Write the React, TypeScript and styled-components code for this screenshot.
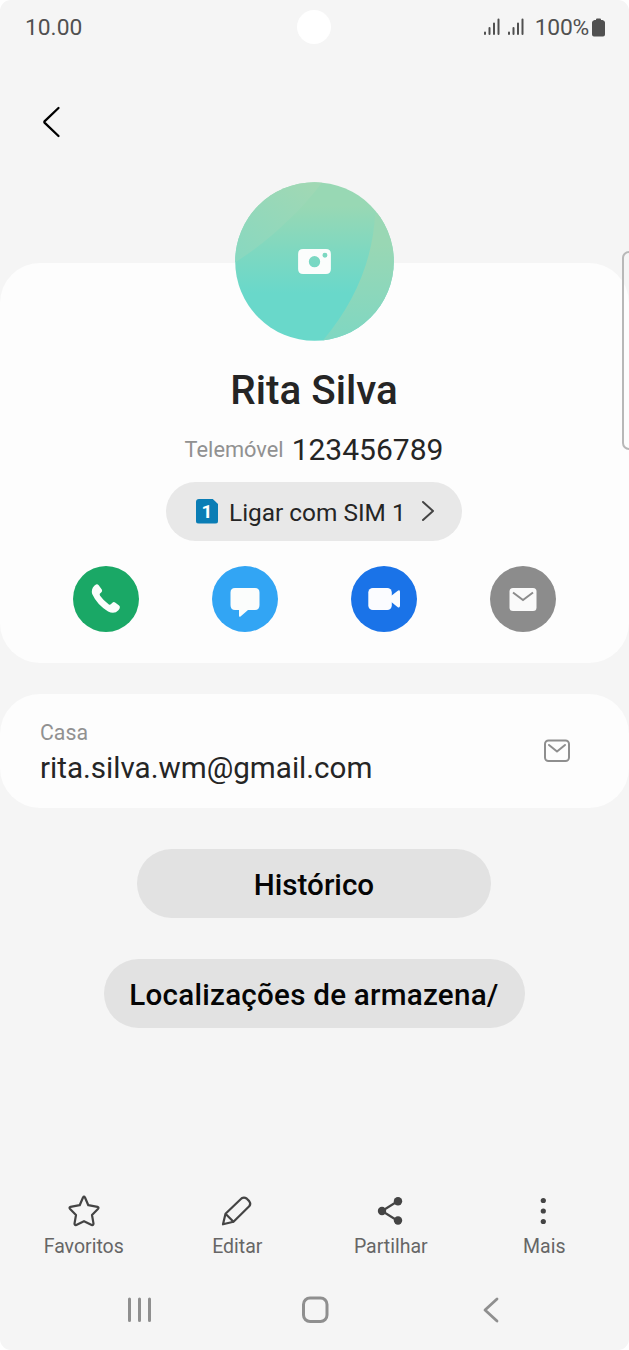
import React from 'react';
import styled, { createGlobalStyle } from 'styled-components';

const GlobalStyle = createGlobalStyle`
  * { box-sizing: border-box; }
  body { margin: 0; background: #fff; font-family: Roboto, "Liberation Sans", sans-serif; }
  button { border: 0; padding: 0; margin: 0; background: none; font: inherit; color: inherit; display: flex; }
  svg { display: block; flex: none; }
`;

const Screen = styled.main`
  position: relative;
  display: flex;
  flex-direction: column;
  width: 629px;
  height: 1350px;
  background: #f5f5f5;
  border-radius: 11px;
  overflow: hidden;
`;

const StatusBar = styled.header`
  display: grid;
  grid-template-columns: 1fr 34px 1fr;
  align-items: center;
  height: 54px;
  padding: 0 24px 0 25px;
  color: #505050;
  font-size: 22.8px;
  line-height: 28px;
`;

const Clock = styled.span`
  padding-top: 1px;
`;

const PunchHole = styled.div`
  width: 34px;
  height: 34px;
  margin-left: -1px;
  border-radius: 50%;
  background: #fff;
`;

const StatusIcons = styled.div`
  display: flex;
  justify-content: flex-end;
  align-items: center;
`;

const Percent = styled.span`
  margin: 0 3px 0 4px;
  padding-top: 1px;
  letter-spacing: -0.2px;
`;

const TopBar = styled.nav`
  display: flex;
  align-items: center;
  height: 137px;
  padding: 0 0 2px 40px;
`;

const Card = styled.section`
  background: #fdfdfd;
`;

const ProfileCard = styled(Card)`
  display: flex;
  flex-direction: column;
  align-items: center;
  height: 400px;
  margin-top: 71.5px;
  padding-right: 1px;
  border-radius: 40px;
`;

const Avatar = styled.button`
  flex: none;
  width: 159px;
  height: 159px;
  margin-top: -81px;
`;

const Name = styled.h1`
  margin: 26px 0 0;
  font-size: 40.4px;
  line-height: 48px;
  font-weight: 500;
  color: #252525;
`;

const PhoneLine = styled.div`
  display: flex;
  align-items: center;
  gap: 8px;
  height: 36px;
  margin-top: 17px;
`;

const Caption = styled.span`
  font-size: 21.8px;
  line-height: 28px;
  color: #919191;
`;

const EmailCaption = styled(Caption)`
  font-size: 21.3px;
`;

const PhoneNumber = styled.span`
  font-size: 30px;
  line-height: 36px;
  color: #252525;
`;

const SimButton = styled.button`
  align-items: center;
  width: 296px;
  height: 59px;
  margin-top: 14px;
  padding: 0 27px 0 30px;
  border-radius: 30px;
  background: #e8e8e8;
  color: #252525;
  font-size: 24.4px;
`;

const SimBadge = styled.span`
  width: 22px;
  height: 25px;
  margin-right: 11px;
  border-radius: 3px;
  background: #0a7db5;
  clip-path: polygon(0 0, 74% 0, 100% 22%, 100% 100%, 0 100%);
  color: #fff;
  font-size: 19px;
  font-weight: 700;
  line-height: 26px;
  text-align: center;
`;

const SimLabel = styled.span`
  flex: 1;
  padding-top: 2px;
  text-align: left;
  white-space: nowrap;
`;

const Actions = styled.div`
  display: flex;
  justify-content: space-between;
  width: 483px;
  margin-top: 25px;
`;

const ActionButton = styled.button<{ $color: string }>`
  align-items: center;
  justify-content: center;
  width: 66px;
  height: 66px;
  border-radius: 50%;
  background: ${({ $color }) => $color};
`;

const EmailCard = styled(Card)`
  display: flex;
  align-items: center;
  justify-content: space-between;
  height: 114px;
  margin-top: 31.5px;
  padding: 2px 58px 0 40px;
  border-radius: 40px;
`;

const EmailText = styled.div`
  display: flex;
  flex-direction: column;
  gap: 3px;
`;

const Email = styled.span`
  font-size: 29.6px;
  line-height: 36px;
  color: #252525;
`;

const EmailAction = styled.button`
  padding-bottom: 3px;
`;

const PillList = styled.div`
  display: flex;
  flex-direction: column;
  align-items: center;
  gap: 41px;
  margin-top: 41px;
  padding-right: 1px;
`;

const Pill = styled.button<{ $width: number; $tracking?: number }>`
  align-items: center;
  justify-content: center;
  width: ${({ $width }) => $width}px;
  height: 69px;
  padding-top: 2px;
  border-radius: 35px;
  background: #e2e2e2;
  color: #050505;
  font-size: 29.6px;
  font-weight: 500;
  letter-spacing: ${({ $tracking = 0 }) => $tracking}px;
  white-space: nowrap;
`;

const Toolbar = styled.div`
  display: grid;
  grid-template-columns: repeat(4, 1fr);
  padding: 0 8px 0 7px;
  margin-top: auto;
`;

const Tool = styled.button`
  flex-direction: column;
  align-items: center;
  gap: 5px;
  color: #666;
  font-size: 19.5px;
  line-height: 28px;
`;

const SystemNav = styled.nav`
  display: flex;
  justify-content: space-between;
  align-items: center;
  height: 80px;
  margin-top: 9px;
  padding: 0 122px 0 123px;
`;

const EdgeHandle = styled.div`
  position: absolute;
  top: 251px;
  right: -8px;
  width: 15px;
  height: 199px;
  border: 2px solid #b8b8b8;
  border-radius: 7px;
`;

const Signal = () => (
  <svg width="24" height="18" viewBox="0 0 24 18" stroke="#505050" strokeWidth="2" strokeLinecap="round">
    <path d="M2 14.500V16M6.500 10V16M11 5.500V16M15.500 1.500V16" />
  </svg>
);

const Battery = () => (
  <svg width="13" height="19" viewBox="0 0 13 19" fill="#505050">
    <path d="M4 2V1.500Q4 .5 5 .5H8Q9 .5 9 1.500V2H10.500Q13 2.500 13 4.500V16.500Q13 18.500 11 18.500H2Q0 18.500 0 16.500V4.500Q0 2.500 2.500 2Z" />
  </svg>
);

const AvatarArt = () => (
  <svg width="159" height="159" viewBox="0 0 160 160">
    <defs>
      <linearGradient id="base" x1="0" y1="0" x2="0" y2="1">
        <stop offset="0.150" stopColor="#98d8b4" />
        <stop offset="0.450" stopColor="#7dd8c1" />
        <stop offset="0.700" stopColor="#69d8ca" />
      </linearGradient>
      <linearGradient id="leaf" x1="0.800" y1="0" x2="0.100" y2="1">
        <stop offset="0" stopColor="#a0d8b4" />
        <stop offset="1" stopColor="#88d8c0" />
      </linearGradient>
      <linearGradient id="edge" x1="0" y1="0" x2="0" y2="1">
        <stop offset="0.300" stopColor="#99d7b4" />
        <stop offset="1" stopColor="#7fd7c2" />
      </linearGradient>
      <clipPath id="disc"><circle cx="80" cy="80" r="79.800" /></clipPath>
    </defs>
    <g clipPath="url(#disc)">
      <rect width="160" height="160" fill="url(#base)" />
      <path d="M0 0H88Q69 25 53 39Q31 61 0 81Z" fill="url(#leaf)" />
      <path d="M141 33Q137 102 88 160H160V20Z" fill="url(#edge)" />
    </g>
    <path
      fillRule="evenodd"
      fill="#fbfdfc"
      d="M68.500 67.500H91.500Q96.500 67.500 96.500 72.500V87.500Q96.500 92.500 91.500 92.500H68.500Q63.500 92.500 63.500 87.500V72.500Q63.500 67.500 68.500 67.500ZM80 74.500A5.700 5.700 0 1 0 80 85.900A5.700 5.700 0 1 0 80 74.500ZM90.500 71.300A2.500 2.500 0 1 0 90.500 76.300A2.500 2.500 0 1 0 90.500 71.300Z"
    />
  </svg>
);

const PhoneIcon = () => (
  <svg width="34" height="34" viewBox="0 0 34 34" fill="#fbfdfc">
    <path d="M5.300 3.800L7 2.600Q8.500 1.900 9.700 3.300L12.800 7.500Q13.700 9 12.400 10.200L10.800 11.700Q10.400 12.500 11.100 13.700Q14.700 18.800 19.900 22.500Q21 23 21.800 22.300L23.400 20.700Q24.700 19.500 26.100 20.500L30.100 23.600Q31.500 24.900 30.600 26.400L29.400 28.200Q25.500 32.500 19.100 29.500Q8.300 23.200 3.200 12.100Q1.900 7 5.300 3.800Z" />
  </svg>
);

const ChatIcon = () => (
  <svg width="34" height="36" viewBox="0 0 34 36" fill="#fbfdfc">
    <path d="M7 7H27Q31.500 7 31.500 11.500V24Q31.500 29 27 29H20L12.800 35.200Q11 36.500 11 34.500V29H7Q2.500 29 2.500 24V11.500Q2.500 7 7 7Z" />
  </svg>
);

const VideoIcon = () => (
  <svg width="34" height="34" viewBox="0 0 34 34" fill="#fbfcff">
    <rect x="1.300" y="6" width="23.500" height="22" rx="4.500" />
    <path d="M24 14L30.500 8.900Q32.700 7.500 33 9.700V23.800Q32.700 26.500 30.500 25L24 19.800Z" />
  </svg>
);

const MailIcon = () => (
  <svg width="34" height="34" viewBox="0 0 34 34">
    <rect x="3.500" y="6" width="27" height="23" rx="3.500" fill="#fafafa" />
    <path d="M7 10.500L17 18L27 10.500" fill="none" stroke="#8c8c8c" strokeWidth="2" />
  </svg>
);

const MailOutline = () => (
  <svg width="28" height="24" viewBox="0 0 28 24" fill="none" stroke="#8e8e8e" strokeWidth="2" strokeLinecap="round" strokeLinejoin="round">
    <rect x="2" y="1.500" width="24" height="20.500" rx="3.500" />
    <path d="M6 6L14 12.500L22 6" />
  </svg>
);

const StarIcon = () => (
  <svg width="34" height="34" viewBox="0 0 34 34" fill="none" stroke="#444" strokeWidth="2.200" strokeLinejoin="round">
    <path d="M16 3.500Q17 1.800 18 3.500L21.300 11.200L30.500 12.900Q32.300 13.500 30.900 15L25 21L26.500 29.600Q26.500 31.500 24.700 30.900L17 27.200L9.300 30.900Q7.500 31.500 7.500 29.600L9 21L3.100 15Q1.700 13.500 3.500 12.900L12.700 11.200Z" />
  </svg>
);

const PencilIcon = () => (
  <svg width="34" height="34" viewBox="0 0 34 34" fill="none" stroke="#444" strokeWidth="2.200" strokeLinejoin="round" strokeLinecap="round">
    <path d="M5.500 19.800L21.700 4.300Q24.100 2.800 26.600 4.500L29.200 7.100Q31.300 9.700 29.200 12.300L13.500 27.800L3 30.300ZM5.500 19.800L13.500 27.800" />
  </svg>
);

const ShareIcon = () => (
  <svg width="34" height="34" viewBox="0 0 34 34" fill="#444">
    <path d="M24 7L8 17L24 27" fill="none" stroke="#444" strokeWidth="2.200" />
    <circle cx="24" cy="7.200" r="4.200" />
    <circle cx="8" cy="17" r="4.200" />
    <circle cx="24" cy="26.500" r="4.200" />
  </svg>
);

const MoreIcon = () => (
  <svg width="34" height="34" viewBox="0 0 34 34" fill="#444">
    <circle cx="16.300" cy="6.500" r="2.600" />
    <circle cx="16.300" cy="17" r="2.600" />
    <circle cx="16.300" cy="27.500" r="2.600" />
  </svg>
);

const tools = [
  { label: 'Favoritos', icon: <StarIcon /> },
  { label: 'Editar', icon: <PencilIcon /> },
  { label: 'Partilhar', icon: <ShareIcon /> },
  { label: 'Mais', icon: <MoreIcon /> },
];

export default function App() {
  return (
    <Screen>
      <GlobalStyle />
      <StatusBar>
        <Clock>10.00</Clock>
        <PunchHole />
        <StatusIcons>
          <Signal />
          <Signal />
          <Percent>100%</Percent>
          <Battery />
        </StatusIcons>
      </StatusBar>
      <TopBar>
        <button aria-label="Voltar">
          <svg width="24" height="34" viewBox="0 0 24 34" fill="none" stroke="#000" strokeWidth="2.300" strokeLinecap="round" strokeLinejoin="round">
            <path d="M18.500 3L4.500 16.300Q4 17 4.500 17.700L18.500 31" />
          </svg>
        </button>
      </TopBar>
      <ProfileCard>
        <Avatar aria-label="Fotografia"><AvatarArt /></Avatar>
        <Name>Rita Silva</Name>
        <PhoneLine>
          <Caption>Telemóvel</Caption>
          <PhoneNumber>123456789</PhoneNumber>
        </PhoneLine>
        <SimButton>
          <SimBadge>1</SimBadge>
          <SimLabel>Ligar com SIM 1</SimLabel>
          <svg width="14" height="22" viewBox="0 0 14 22" fill="none" stroke="#444" strokeWidth="2" strokeLinecap="round" strokeLinejoin="round">
            <path d="M2 2L12 11L2 20" />
          </svg>
        </SimButton>
        <Actions>
          <ActionButton $color="#1aa866" aria-label="Ligar"><PhoneIcon /></ActionButton>
          <ActionButton $color="#32a5f4" aria-label="Mensagem"><ChatIcon /></ActionButton>
          <ActionButton $color="#1a73e8" aria-label="Vídeo"><VideoIcon /></ActionButton>
          <ActionButton $color="#8c8c8c" aria-label="E-mail"><MailIcon /></ActionButton>
        </Actions>
      </ProfileCard>
      <EmailCard>
        <EmailText>
          <EmailCaption>Casa</EmailCaption>
          <Email>rita.silva.wm@gmail.com</Email>
        </EmailText>
        <EmailAction aria-label="Enviar e-mail"><MailOutline /></EmailAction>
      </EmailCard>
      <PillList>
        <Pill $width={354}>Histórico</Pill>
        <Pill $width={421} $tracking={0.24}>Localizações de armazena/</Pill>
      </PillList>
      <Toolbar>
        {tools.map(({ label, icon }) => (
          <Tool key={label}>{icon}{label}</Tool>
        ))}
      </Toolbar>
      <SystemNav>
        <svg width="32" height="32" viewBox="0 0 32 32" stroke="#8f8f8f" strokeWidth="3" strokeLinecap="round">
          <path d="M6.500 5V26.500M16.500 5V26.500M26.500 5V26.500" />
        </svg>
        <svg width="32" height="32" viewBox="0 0 32 32" fill="none" stroke="#8f8f8f" strokeWidth="3">
          <rect x="4.500" y="4" width="23.500" height="23.500" rx="6.500" />
        </svg>
        <svg width="32" height="32" viewBox="0 0 32 32" fill="none" stroke="#8f8f8f" strokeWidth="2.800" strokeLinecap="round" strokeLinejoin="round">
          <path d="M22 5L10 16L22 27" />
        </svg>
      </SystemNav>
      <EdgeHandle />
    </Screen>
  );
}
